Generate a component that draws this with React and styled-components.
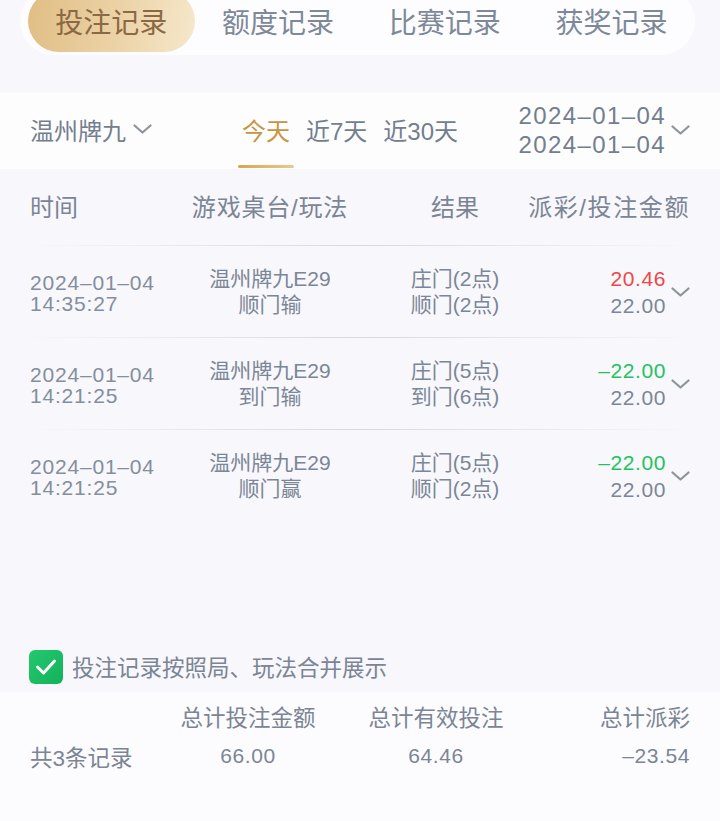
import React from "react";
import styled, { createGlobalStyle, css } from "styled-components";

const FONT = '"Liberation Sans", "Noto Sans CJK SC", sans-serif';
const GREY = "#7b8696";

const Global = createGlobalStyle`
  html, body { margin: 0; padding: 0; background: #f7f7fc; }
  body { font-family: ${FONT}; -webkit-font-smoothing: antialiased; }
  * { box-sizing: border-box; }
`;

const Page = styled.div`
  height: 821px;
  overflow: hidden;
  display: flex;
  flex-direction: column;
  background: #f7f7fc;
  color: ${GREY};
`;

const TabBar = styled.div`
  display: flex;
  height: 68px;
  margin: -13px 25px 0 20px;
  padding: 3px 0 3px 8px;
  background: #fdfdff;
  border-radius: 34px;
`;

const Tab = styled.div`
  flex: 1;
  display: flex;
  align-items: center;
  justify-content: center;
  font-size: 28px;
  color: #7d8898;
  border-radius: 31px;
  ${(p) =>
    p.$active &&
    css`
      color: #8a6944;
      background: linear-gradient(100deg, #e0bd84 0%, #ecd3a7 55%, #f6e8cc 100%);
    `}
`;

const FilterBar = styled.div`
  margin-top: 38px;
  height: 76px;
  display: flex;
  align-items: center;
  padding: 0 30px;
  background: #fdfdfe;
`;

const Select = styled.div`
  width: 212px;
  display: flex;
  align-items: center;
  gap: 7px;
  padding-bottom: 4px;
  font-size: 24px;
  color: #737e8e;
`;

const Periods = styled.div`
  display: flex;
  gap: 16px;
  height: 100%;
`;

const Period = styled.div`
  position: relative;
  display: flex;
  align-items: center;
  padding-bottom: 4px;
  font-size: 24px;
  color: ${(p) => (p.$active ? "#c99440" : "#737e8e")};
  ${(p) =>
    p.$active &&
    css`
      &::after {
        content: "";
        position: absolute;
        left: -4px;
        right: -4px;
        bottom: 1px;
        height: 3px;
        border-radius: 2px;
        background: linear-gradient(90deg, #d9a64e, #e9c98e);
      }
    `}
`;

const DateRange = styled.div`
  margin-left: auto;
  display: flex;
  align-items: center;
  gap: 5px;
  padding-bottom: 3px;
`;

const Dates = styled.div`
  font-size: 24px;
  line-height: 29px;
  letter-spacing: 1.4px;
  color: #737e8e;
  text-align: right;
`;

const Grid = css`
  display: grid;
  grid-template-columns: 150px 180px 190px minmax(0, 1fr);
  align-items: center;
  padding: 0 30px;
`;

const HeaderRow = styled.div`
  ${Grid}
  height: 76px;
  padding-bottom: 3px;
  font-size: 24px;
  color: #7b8595;
`;

const Cell = styled.div`
  display: flex;
  min-width: 0;
  white-space: nowrap;
  justify-content: ${(p) => p.$justify || "flex-start"};
  letter-spacing: ${(p) => p.$spacing || "0"};
`;

const Row = styled.div`
  ${Grid}
  height: 92px;
  padding-top: 1px;
  background: linear-gradient(90deg, rgba(220, 219, 228, 0) 3%, #d9d8e1 50%, rgba(220, 219, 228, 0) 97%) top / 100% 1px no-repeat;
`;

const Time = styled.div`
  font-size: 21px;
  line-height: 21px;
  letter-spacing: 0.8px;
  color: #848e9c;
  padding-top: 2px;
`;

const Stack = styled.div`
  font-size: 21px;
  line-height: 26px;
  color: ${GREY};
  text-align: center;
`;

const AmountCell = styled.div`
  display: flex;
  align-items: center;
  justify-content: flex-end;
  gap: 5px;
`;

const Amounts = styled.div`
  font-size: 21px;
  line-height: 27px;
  letter-spacing: 0.6px;
  text-align: right;
`;

const Payout = styled.div`
  color: ${(p) => (p.$win ? "#ec4848" : "#22c35e")};
`;

const Bet = styled.div`
  color: ${GREY};
`;

const CheckRow = styled.div`
  margin-top: auto;
  height: 50px;
  display: flex;
  align-items: center;
  gap: 9px;
  padding-left: 29px;
  padding-bottom: 2px;
  font-size: 22.5px;
  color: #7b8595;
`;

const CheckBox = styled.div`
  width: 34px;
  height: 34px;
  margin-top: 2px;
  border-radius: 6px;
  background: linear-gradient(135deg, #24c86f, #13b25a);
  display: flex;
  align-items: center;
  justify-content: center;
`;

const Footer = styled.div`
  height: 129px;
  background: #fcfcfe;
  padding: 6px 30px 0;
  display: grid;
  grid-template-columns: 120px 196px 180px 1fr;
  grid-template-rows: 36px 44px;
  align-items: center;
`;

const FootLabel = styled.div`
  font-size: 22.5px;
  color: #7b8595;
  text-align: ${(p) => p.$align || "center"};
`;

const FootValue = styled.div`
  font-size: ${(p) => (p.$cjk ? "22.5px" : "21px")};
  letter-spacing: ${(p) => (p.$cjk ? "0" : "0.6px")};
  color: #7b8595;
  text-align: ${(p) => p.$align || "center"};
`;

const Chevron = ({ w = 19, h = 10, color = "#8e949c" }) => (
  <svg width={w} height={h} viewBox="0 0 19 10" fill="none">
    <polyline points="1.5,1.5 9.5,8.5 17.5,1.5" stroke={color} strokeWidth="2.2" strokeLinecap="round" strokeLinejoin="round" />
  </svg>
);

const rows = [
  { d: "2024–01–04", t: "14:35:27", g: "温州牌九E29", p: "顺门输", r1: "庄门(2点)", r2: "顺门(2点)", pay: "20.46", win: true, bet: "22.00" },
  { d: "2024–01–04", t: "14:21:25", g: "温州牌九E29", p: "到门输", r1: "庄门(5点)", r2: "到门(6点)", pay: "–22.00", win: false, bet: "22.00" },
  { d: "2024–01–04", t: "14:21:25", g: "温州牌九E29", p: "顺门赢", r1: "庄门(5点)", r2: "顺门(2点)", pay: "–22.00", win: false, bet: "22.00" },
];

export default function App() {
  return (
    <>
      <Global />
      <Page>
        <TabBar>
          <Tab $active>投注记录</Tab>
          <Tab>额度记录</Tab>
          <Tab>比赛记录</Tab>
          <Tab>获奖记录</Tab>
        </TabBar>

        <FilterBar>
          <Select>
            温州牌九
            <Chevron />
          </Select>
          <Periods>
            <Period $active>今天</Period>
            <Period>近7天</Period>
            <Period>近30天</Period>
          </Periods>
          <DateRange>
            <Dates>
              <div>2024–01–04</div>
              <div>2024–01–04</div>
            </Dates>
            <Chevron />
          </DateRange>
        </FilterBar>

        <HeaderRow>
          <Cell>时间</Cell>
          <Cell $justify="center" $spacing="0.8px">游戏桌台/玩法</Cell>
          <Cell $justify="center">结果</Cell>
          <Cell $justify="flex-end" $spacing="1.6px">派彩/投注金额</Cell>
        </HeaderRow>

        {rows.map((r, i) => (
          <Row key={i}>
            <Time>
              <div>{r.d}</div>
              <div>{r.t}</div>
            </Time>
            <Stack>
              <div>{r.g}</div>
              <div>{r.p}</div>
            </Stack>
            <Stack>
              <div>{r.r1}</div>
              <div>{r.r2}</div>
            </Stack>
            <AmountCell>
              <Amounts>
                <Payout $win={r.win}>{r.pay}</Payout>
                <Bet>{r.bet}</Bet>
              </Amounts>
              <Chevron />
            </AmountCell>
          </Row>
        ))}

        <CheckRow>
          <CheckBox>
            <svg width="22" height="18" viewBox="0 0 22 18" fill="none">
              <polyline points="2.5,9 8.5,15 19.5,3" stroke="#fff" strokeWidth="3" strokeLinecap="round" strokeLinejoin="round" />
            </svg>
          </CheckBox>
          投注记录按照局、玩法合并展示
        </CheckRow>

        <Footer>
          <div />
          <FootLabel>总计投注金额</FootLabel>
          <FootLabel>总计有效投注</FootLabel>
          <FootLabel $align="right">总计派彩</FootLabel>
          <FootValue $cjk $align="left">共3条记录</FootValue>
          <FootValue>66.00</FootValue>
          <FootValue>64.46</FootValue>
          <FootValue $align="right">–23.54</FootValue>
        </Footer>
      </Page>
    </>
  );
}
